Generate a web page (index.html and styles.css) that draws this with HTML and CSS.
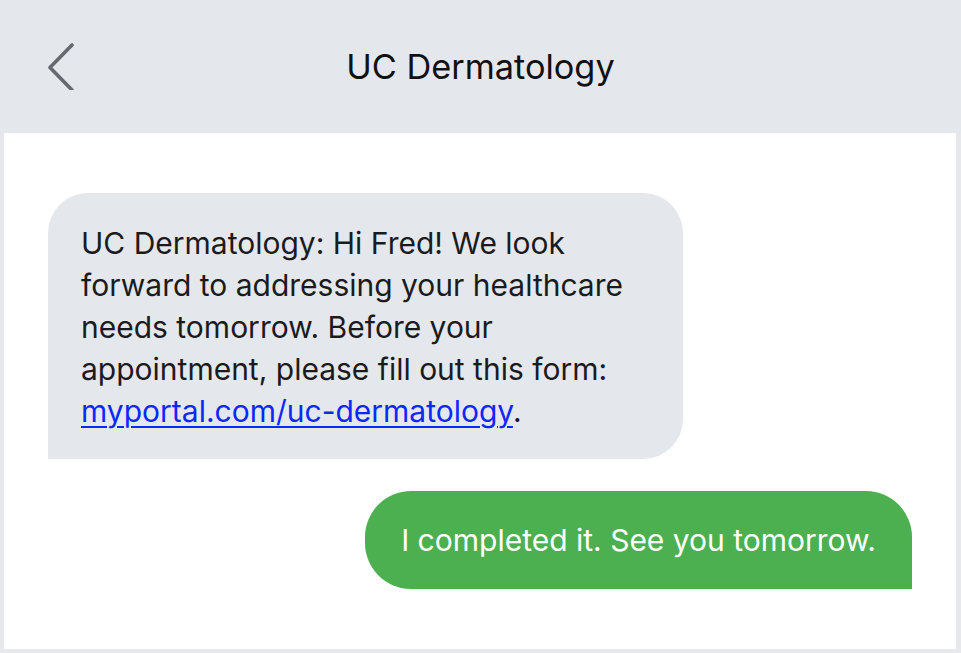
FILE: index.html
```html
<!DOCTYPE html>
<html lang="en">
<head>
<meta charset="utf-8">
<title>UC Dermatology</title>
<link rel="stylesheet" href="styles.css">
</head>
<body>
<div class="frame">
  <header class="header">
    <button class="back" aria-label="Back">
      <svg width="30" height="50" viewBox="0 0 30 50"><path d="M26 5 L4 27.5 L26 50" fill="none" stroke="#66696f" stroke-width="3.6" stroke-linecap="round" stroke-linejoin="round"/></svg>
    </button>
    <h1 class="title">UC Dermatology</h1>
  </header>
  <main class="chat">
    <div class="bubble incoming">UC Dermatology: Hi Fred! We look forward to addressing your healthcare needs tomorrow. Before your appointment, please fill out this form: <a href="#" class="link">myportal.com/uc-dermatology</a>.</div>
    <div class="bubble outgoing">I completed it. See you tomorrow.</div>
  </main>
</div>
</body>
</html>
```
FILE: styles.css
```css
* { box-sizing: border-box; }
html, body { margin: 0; padding: 0; }
body {
  width: 961px;
  height: 653px;
  background: #e6e8ec;
  font-family: Inter, "Noto Sans", sans-serif;
}
.frame {
  width: 961px;
  height: 653px;
  padding: 0 5px 4px 4px;
  display: flex;
  flex-direction: column;
  background: #e6e8ec;
}
.header {
  position: relative;
  height: 133px;
  flex: none;
  display: flex;
  align-items: center;
  justify-content: center;
  background: #e4e7ec;
  margin: 0 -5px 0 -4px;
}
.back {
  position: absolute;
  left: 46px;
  top: 40px;
  border: 0;
  padding: 0;
  background: none;
  width: 30px;
  height: 50px;
}
.back svg { display: block; }
.title {
  margin: 0;
  font-weight: 400;
  font-size: 34.3px;
  color: #111;
  letter-spacing: 0;
}
.chat {
  flex: 1;
  background: #fff;
  padding: 60px 44px 0 44px;
  display: flex;
  flex-direction: column;
  gap: 32px;
}
.bubble {
  font-size: 30px;
  line-height: 42px;
}
.incoming {
  align-self: flex-start;
  width: 635px;
  background: #e4e7ec;
  color: #1b1b1d;
  border-radius: 40px 40px 40px 0;
  padding: 29px 20px 27px 33px;
}
.link {
  color: #0d28ff;
  text-decoration: underline;
  text-underline-offset: 4px;
  text-decoration-thickness: 2px;
}
.outgoing {
  align-self: flex-end;
  background: #4caf50;
  color: #fff;
  border-radius: 46px 46px 0 46px;
  padding: 28px 36px 28px 36px;
}
```
